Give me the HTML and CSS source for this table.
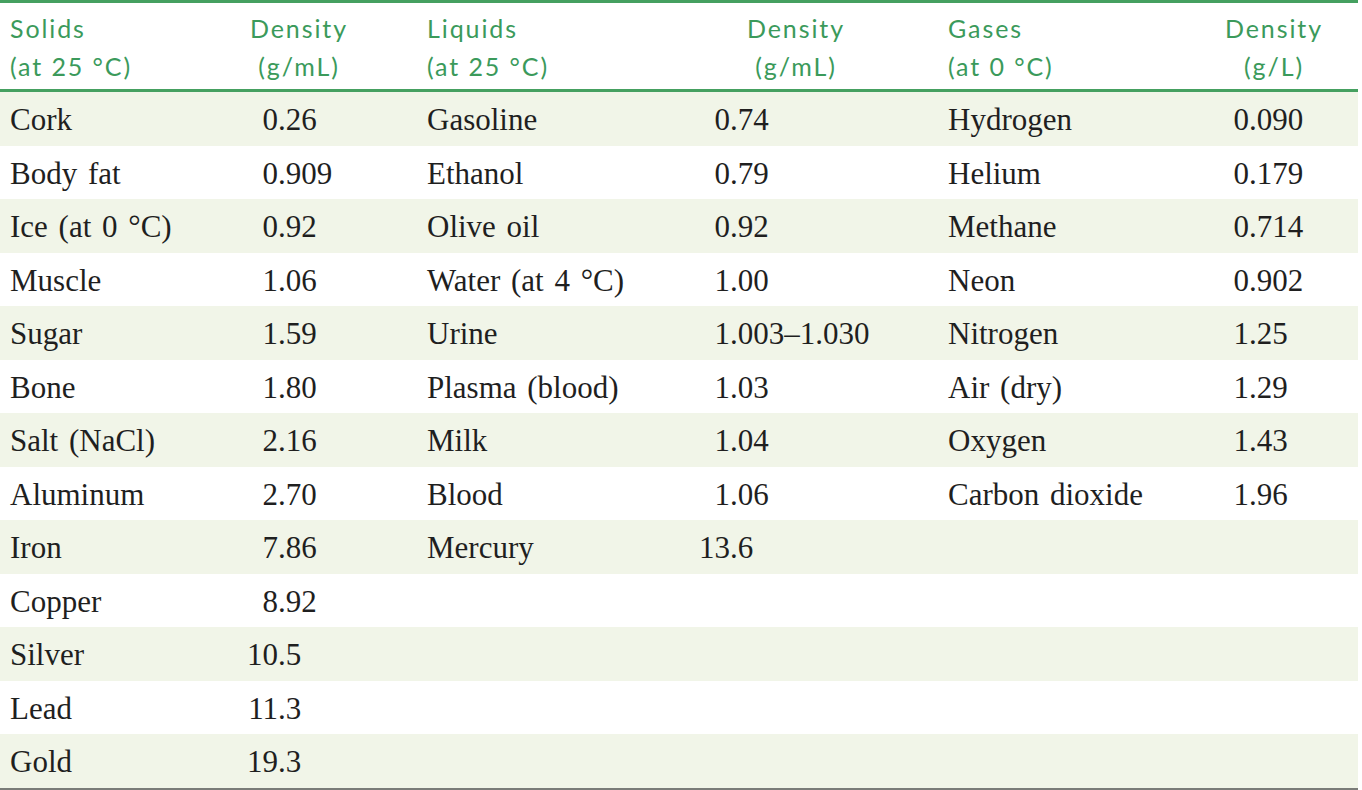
FILE: index.html
```html
<!DOCTYPE html>
<html>
<head>
<meta charset="utf-8">
<link rel="stylesheet" href="styles.css">
</head>
<body>
<div class="density">
  <div class="head">
    <div class="hd n1">Solids<br>(at 25 °C)</div>
    <div class="hd d1"><span class="hb">Density<br>(g/mL)</span></div>
    <div class="hd n2">Liquids<br>(at 25 °C)</div>
    <div class="hd d2"><span class="hb">Density<br>(g/mL)</span></div>
    <div class="hd n3">Gases<br>(at 0 °C)</div>
    <div class="hd d3"><span class="hb">Density<br>(g/L)</span></div>
  </div>
  <div class="row g">
    <div class="cell n1">Cork</div><div class="cell v1"><span class="i">0</span>.26</div>
    <div class="cell n2">Gasoline</div><div class="cell v2"><span class="i">0</span>.74</div>
    <div class="cell n3">Hydrogen</div><div class="cell v3"><span class="i">0</span>.090</div>
  </div>
  <div class="row">
    <div class="cell n1">Body fat</div><div class="cell v1"><span class="i">0</span>.909</div>
    <div class="cell n2">Ethanol</div><div class="cell v2"><span class="i">0</span>.79</div>
    <div class="cell n3">Helium</div><div class="cell v3"><span class="i">0</span>.179</div>
  </div>
  <div class="row g">
    <div class="cell n1">Ice (at 0 °C)</div><div class="cell v1"><span class="i">0</span>.92</div>
    <div class="cell n2">Olive oil</div><div class="cell v2"><span class="i">0</span>.92</div>
    <div class="cell n3">Methane</div><div class="cell v3"><span class="i">0</span>.714</div>
  </div>
  <div class="row">
    <div class="cell n1">Muscle</div><div class="cell v1"><span class="i">1</span>.06</div>
    <div class="cell n2">Water (at 4 °C)</div><div class="cell v2"><span class="i">1</span>.00</div>
    <div class="cell n3">Neon</div><div class="cell v3"><span class="i">0</span>.902</div>
  </div>
  <div class="row g">
    <div class="cell n1">Sugar</div><div class="cell v1"><span class="i">1</span>.59</div>
    <div class="cell n2">Urine</div><div class="cell v2"><span class="i">1</span>.003–1.030</div>
    <div class="cell n3">Nitrogen</div><div class="cell v3"><span class="i">1</span>.25</div>
  </div>
  <div class="row">
    <div class="cell n1">Bone</div><div class="cell v1"><span class="i">1</span>.80</div>
    <div class="cell n2">Plasma (blood)</div><div class="cell v2"><span class="i">1</span>.03</div>
    <div class="cell n3">Air (dry)</div><div class="cell v3"><span class="i">1</span>.29</div>
  </div>
  <div class="row g">
    <div class="cell n1">Salt (NaCl)</div><div class="cell v1"><span class="i">2</span>.16</div>
    <div class="cell n2">Milk</div><div class="cell v2"><span class="i">1</span>.04</div>
    <div class="cell n3">Oxygen</div><div class="cell v3"><span class="i">1</span>.43</div>
  </div>
  <div class="row">
    <div class="cell n1">Aluminum</div><div class="cell v1"><span class="i">2</span>.70</div>
    <div class="cell n2">Blood</div><div class="cell v2"><span class="i">1</span>.06</div>
    <div class="cell n3">Carbon dioxide</div><div class="cell v3"><span class="i">1</span>.96</div>
  </div>
  <div class="row g">
    <div class="cell n1">Iron</div><div class="cell v1"><span class="i">7</span>.86</div>
    <div class="cell n2">Mercury</div><div class="cell v2"><span class="i">13</span>.6</div>
    <div class="cell n3"></div><div class="cell v3"></div>
  </div>
  <div class="row">
    <div class="cell n1">Copper</div><div class="cell v1"><span class="i">8</span>.92</div>
    <div class="cell n2"></div><div class="cell v2"></div>
    <div class="cell n3"></div><div class="cell v3"></div>
  </div>
  <div class="row g">
    <div class="cell n1">Silver</div><div class="cell v1"><span class="i">10</span>.5</div>
    <div class="cell n2"></div><div class="cell v2"></div>
    <div class="cell n3"></div><div class="cell v3"></div>
  </div>
  <div class="row">
    <div class="cell n1">Lead</div><div class="cell v1"><span class="i">11</span>.3</div>
    <div class="cell n2"></div><div class="cell v2"></div>
    <div class="cell n3"></div><div class="cell v3"></div>
  </div>
  <div class="row g">
    <div class="cell n1">Gold</div><div class="cell v1"><span class="i">19</span>.3</div>
    <div class="cell n2"></div><div class="cell v2"></div>
    <div class="cell n3"></div><div class="cell v3"></div>
  </div>
</div>
</body>
</html>
```

FILE: styles.css
```css
html, body {
  margin: 0;
  padding: 0;
  background: #ffffff;
}

.density {
  width: 1358px;
  border-top: 3px solid #45a060;
  border-bottom: 3px solid #7a7c78;
}

.head, .row {
  display: grid;
  grid-template-columns: 230px 185px 275px 245px 280px 143px;
}

.head {
  border-bottom: 3px solid #45a060;
  height: 89px;
  padding-top: 6px;
  box-sizing: border-box;
}

.hd {
  font-family: "Lato";
  font-weight: 400;
  font-size: 25px;
  letter-spacing: 1.9px;
  line-height: 38px;
  color: #3b9a5b;
  white-space: nowrap;
}

.hb {
  display: inline-block;
  text-align: center;
}

.hd.d1 { padding-left: 20px; }
.hd.d2 { padding-left: 57px; }
.hd.d3 { padding-left: 10px; }

.row {
  height: 53.5px;
  align-items: center;
}

.row.g {
  background: #f1f5e8;
}

.cell {
  font-family: "Liberation Serif";
  font-size: 31px;
  word-spacing: 3px;
  color: #1f1f1f;
  white-space: nowrap;
  padding-top: 3px;
}

.n1 { padding-left: 10px; }
.n2 { padding-left: 12px; }
.n3 { padding-left: 13px; }

.cell.v1 { padding-left: 14px; }
.cell.v2 { padding-left: 6px; }
.cell.v3 { padding-left: 0; }

.i {
  display: inline-block;
  width: 34px;
  text-align: right;
}
```
